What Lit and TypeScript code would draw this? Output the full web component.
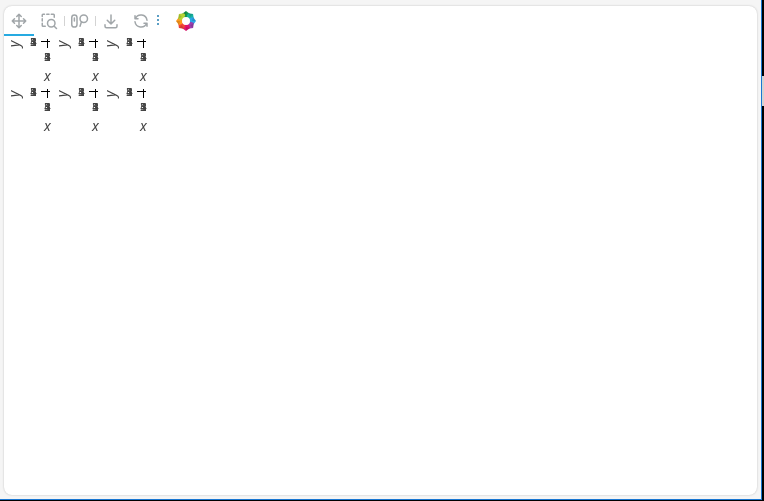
import { LitElement, html, css, svg } from "lit";
import { customElement } from "lit/decorators.js";

@customElement("plot-cell")
class PlotCell extends LitElement {
  static styles = css`
    :host {
      display: grid;
      grid-template-columns: 10px 22px 10px;
      grid-template-rows: 10px 10px 12px;
      row-gap: 5px;
      padding: 2px 0 0 5px;
      box-sizing: border-box;
      height: 50px;
      color: #444;
      font-family: "DejaVu Sans", sans-serif;
      will-change: transform;
    }
    .ylabel, .xlabel { font: italic 14px/12px "Noto Sans", sans-serif; text-align: center; }
    .ylabel { display: grid; place-items: center; }
    .ylabel span { transform: rotate(-90deg); }
    .ticks { display: grid; font-size: 11px; line-height: 10px; text-align: right; }
    .ticks span { grid-area: 1 / 1; }
    .yticks { padding-right: 4px; }
    .xticks, .xlabel { grid-column: 3; }
    .xlabel { padding: 2px 0 0 3px; }
    .frame { display: block; width: 10px; height: 10px; }
  `;
  render() {
    const ticks = ["1", "2", "3", "4", "5"].map((t) => html`<span>${t}</span>`);
    return html`
      <div class="ylabel"><span>y</span></div>
      <div class="ticks yticks">${ticks}</div>
      <svg class="frame" viewBox="0 0 10 10" shape-rendering="crispEdges">
        <path d="M0 3h9v1H0z M6 1h1v9H6z" fill="#000" />
      </svg>
      <div class="ticks xticks">${ticks}</div>
      <div class="xlabel">x</div>
    `;
  }
}

const icons = {
  pan: svg`<path d="M12 3v18M3 12h18M9 6l3-3 3 3M9 18l3 3 3-3M6 9l-3 3 3 3M18 9l3 3-3 3" />`,
  box: svg`<path d="M3 6V4a1 1 0 0 1 1-1h2M9 3h3M15 3h3a1 1 0 0 1 1 1v3M3 9v3M3 15v3a1 1 0 0 0 1 1h3" /><circle cx="15" cy="15" r="5" /><path d="M19 19l3 3" />`,
  wheel: svg`<rect x="1" y="4" width="7" height="16" rx="3.5" /><path d="M4.5 8v4" /><circle cx="17" cy="9" r="5" /><path d="M14 13l-2 6" />`,
  save: svg`<path d="M4 17v2a2 2 0 0 0 2 2h12a2 2 0 0 0 2-2v-2M7 11l5 5 5-5M12 4v12" />`,
  reset: svg`<path d="M20 11A8.1 8.1 0 0 0 4.5 9M4 5v4h4M4 13a8.1 8.1 0 0 0 15.5 2M20 19v-4h-4" />`,
};

const petals = ["#14964a", "#17b3a0", "#2ba6e8", "#9b3fae", "#e0126f", "#f04438", "#fd9a1c", "#b5d334"];

@customElement("app-root")
class AppRoot extends LitElement {
  static styles = css`
    :host {
      display: flex;
      box-sizing: border-box;
      height: 100vh;
      background: #000;
    }
    .page {
      flex: 1;
      box-sizing: border-box;
      margin-bottom: 1px;
      padding: 6px 4px 4px;
      background: #f5f5f5;
      border: solid #1976d2;
      border-width: 0 1px 1px 0;
      display: flex;
    }
    .card {
      flex: 1;
      background: #fff;
      border-radius: 8px;
      box-shadow: 0 0 2px #bbb;
    }
    .toolbar { display: flex; align-items: center; height: 30px; }
    button {
      width: 30px;
      height: 30px;
      padding: 0;
      border: 0;
      background: none;
      color: #a1a6a9;
      display: grid;
      place-items: center;
    }
    .tool { border: solid transparent; border-width: 2px 0; }
    .tool.active { border-bottom-color: #26aae1; }
    .tool svg {
      width: 18px;
      height: 18px;
      fill: none;
      stroke: currentColor;
      stroke-width: 2;
      stroke-linecap: round;
      stroke-linejoin: round;
    }
    .divider { width: 1px; height: 10px; background: #d3d3d3; }
    .more { width: 4px; }
    .more svg { width: 4px; height: 12px; margin-bottom: 3px; fill: #5b9fc5; }
    .logo { margin-left: 16px; display: flex; }
    .logo svg { width: 20px; height: 20px; }
    .plots { display: grid; grid-template-columns: repeat(3, 48px); }
    .scroll { width: 2px; padding-top: 76px; background: #000; }
    .thumb { height: 30px; background: #d3d3d3; }
  `;
  tool(icon: keyof typeof icons, label: string, active = false) {
    return html`<button class="tool ${active ? "active" : ""}" aria-label=${label}>
      <svg viewBox="0 0 24 24">${icons[icon]}</svg>
    </button>`;
  }
  render() {
    return html`
      <main class="page">
        <section class="card">
          <div class="toolbar">
            ${this.tool("pan", "Pan", true)}${this.tool("box", "Box Zoom")}
            <span class="divider"></span>
            ${this.tool("wheel", "Wheel Zoom")}
            <span class="divider"></span>
            ${this.tool("save", "Save")}${this.tool("reset", "Reset")}
            <button class="more" aria-label="More">
              <svg viewBox="0 0 4 12" shape-rendering="crispEdges"><path d="M1 1h2v2H1z M1 5h2v2H1z M1 9h2v2H1z" /></svg>
            </button>
            <a class="logo" href="#" aria-label="Bokeh">
              <svg viewBox="0 0 20 20">
                ${petals.map((c, i) => svg`<g transform="rotate(${i * 45} 10 10)"><path fill=${c} d="M10 0L14 3L14 5L10 7L7 6L6 3Z" /><path fill="#000" fill-opacity=".12" d="M6 3L10 0L10 4Z" /></g>`)}
                <circle cx="10" cy="10" r="4" fill="#fff" />
              </svg>
            </a>
          </div>
          <div class="plots">${Array.from({ length: 6 }, () => html`<plot-cell></plot-cell>`)}</div>
        </section>
      </main>
      <div class="scroll"><div class="thumb"></div></div>
    `;
  }
}
